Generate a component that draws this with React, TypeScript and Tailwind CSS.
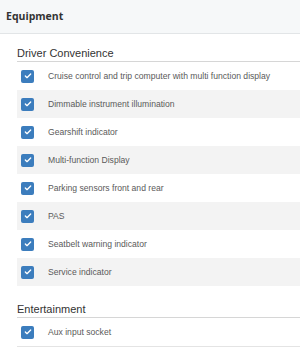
import { Check } from "lucide-react";

type Section = {
  title: string;
  items: string[];
};

const sections: Section[] = [
  {
    title: "Driver Convenience",
    items: [
      "Cruise control and trip computer with multi function display",
      "Dimmable instrument illumination",
      "Gearshift indicator",
      "Multi-function Display",
      "Parking sensors front and rear",
      "PAS",
      "Seatbelt warning indicator",
      "Service indicator",
    ],
  },
  {
    title: "Entertainment",
    items: ["Aux input socket"],
  },
];

const Checkbox = () => (
  <span className="flex h-[13px] w-[13px] shrink-0 items-center justify-center rounded-[2px] bg-[#3c7dbd]">
    <Check className="h-[8px] w-[8px] text-white" strokeWidth={4} />
  </span>
);

export default function App() {
  return (
    <div className="h-[350px] w-[300px] overflow-hidden bg-white font-['Liberation_Sans',Arial,sans-serif]">
      <div className="flex h-[34px] items-center border-b border-[#e2e5e7] bg-[#f6f8f9] px-[6px]">
        <h2 className="font-['Open_Sans',sans-serif] text-[10.5px] font-bold text-[#333]">
          Equipment
        </h2>
      </div>
      <div className="flex flex-col gap-[15px] pl-[17px] pt-[11px]">
        {sections.map((section) => (
          <div key={section.title}>
            <h3 className="h-[17px] border-b border-[#d6d6d6] text-[11px] leading-[16px] text-[#333]">
              {section.title}
            </h3>
            <ul className={section.items.length === 1 ? "border-b border-[#e4e4e4]" : ""}>
              {section.items.map((item, i) => (
                <li
                  key={item}
                  className={`flex h-[28px] items-center gap-[14px] pl-[4px] ${
                    i % 2 === 1 ? "bg-[#f3f3f3]" : "bg-white"
                  }`}
                >
                  <Checkbox />
                  <span className="whitespace-nowrap text-[8.6px] text-[#5a5a5a]">{item}</span>
                </li>
              ))}
            </ul>
          </div>
        ))}
      </div>
    </div>
  );
}
